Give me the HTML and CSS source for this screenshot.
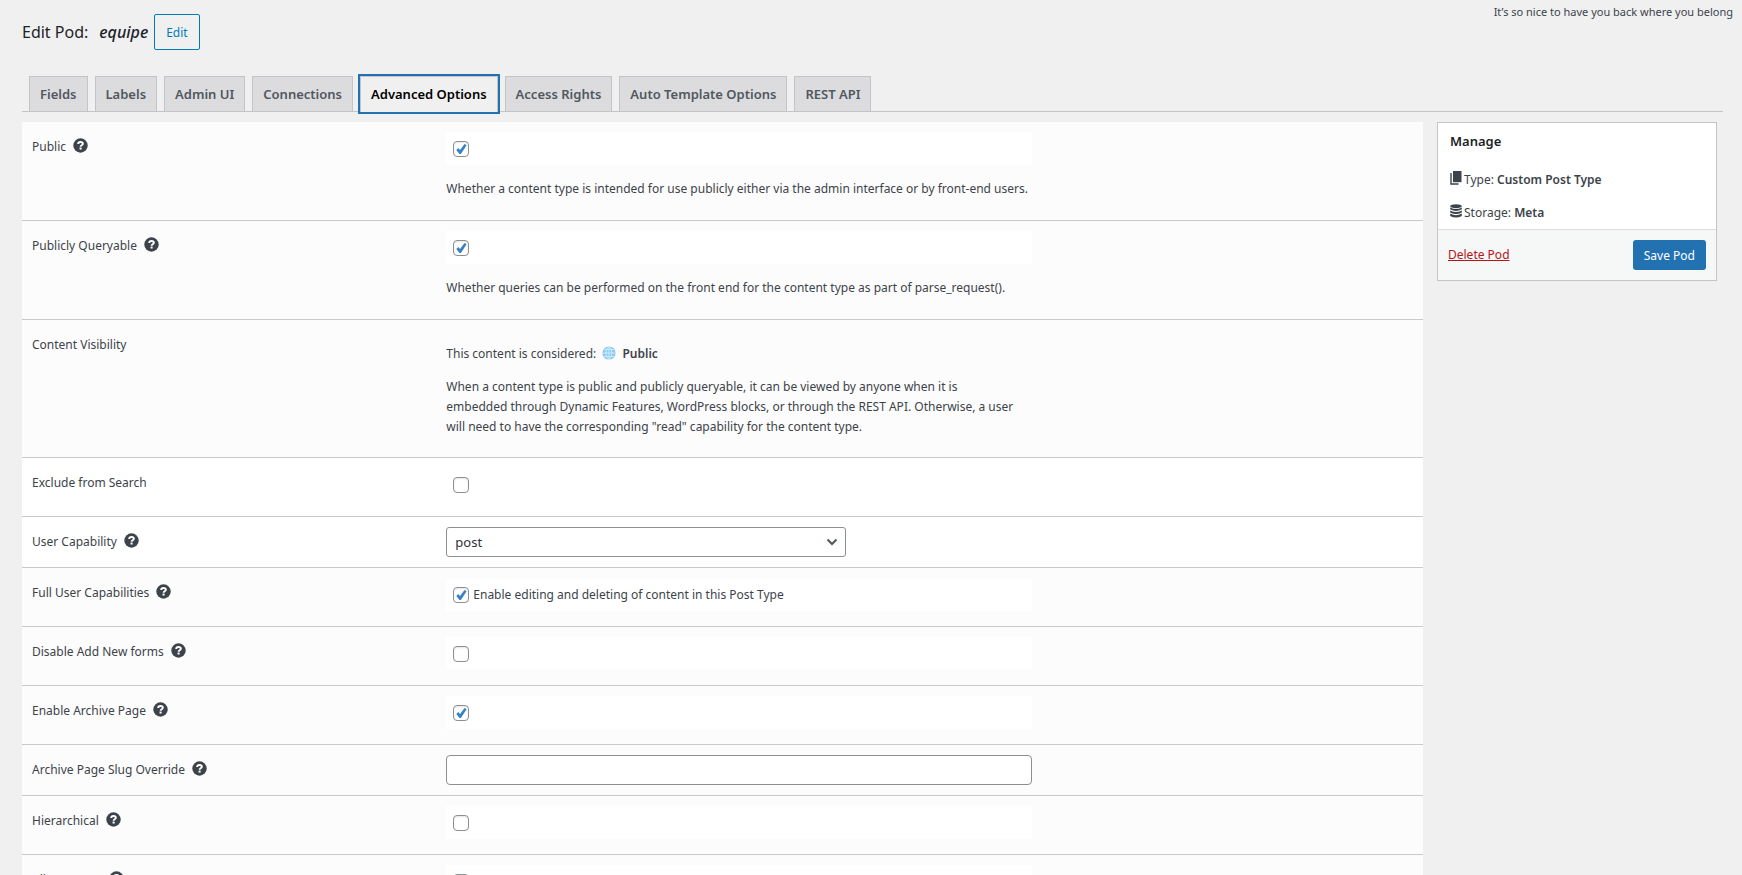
FILE: index.html
```html
<!DOCTYPE html>
<html lang="en">
<head>
    <meta charset="UTF-8">
    <meta name="viewport" content="width=device-width, initial-scale=1.0">
    <title>Edit Pod: equipe</title>
    <link rel="stylesheet" href="styles.css">
</head>
<body>
    <!-- Shared icons -->
    <svg class="sprite" aria-hidden="true">
        <symbol id="icon-help" viewBox="0 0 16 16">
            <circle cx="8" cy="8" r="7.7" fill="#3c434a"/>
            <path d="M5.500 6.400C5.500 4.900 6.500 4.200 8 4.200s2.500.7 2.500 2c0 1.700-2.400 1.500-2.400 3.200" fill="none" stroke="#fff" stroke-width="2"/>
            <rect x="7" y="10.200" width="2.200" height="2.100" fill="#fff"/>
        </symbol>
    </svg>

    <p class="greeting">It’s so nice to have you back where you belong</p>

    <header class="page-header">
        <h1>Edit Pod: <em>equipe</em></h1>
        <button type="button" class="edit-btn">Edit</button>
    </header>

    <nav class="tabs">
        <a href="#fields" class="tab">Fields</a>
        <a href="#labels" class="tab">Labels</a>
        <a href="#admin-ui" class="tab">Admin UI</a>
        <a href="#connections" class="tab">Connections</a>
        <a href="#advanced" class="tab tab-active">Advanced Options</a>
        <a href="#access" class="tab">Access Rights</a>
        <a href="#auto-template" class="tab">Auto Template Options</a>
        <a href="#rest-api" class="tab">REST API</a>
    </nav>

    <div class="layout">
        <main class="options">
            <div class="row">
                <div class="row-label">
                    <label for="public">Public</label>
                    <svg class="help"><use href="#icon-help"/></svg>
                </div>
                <div class="row-field">
                    <div class="check-box"><input type="checkbox" id="public" checked></div>
                    <p class="description">Whether a content type is intended for use publicly either via the admin interface or by front-end users.</p>
                </div>
            </div>

            <div class="row">
                <div class="row-label">
                    <label for="queryable">Publicly Queryable</label>
                    <svg class="help"><use href="#icon-help"/></svg>
                </div>
                <div class="row-field">
                    <div class="check-box"><input type="checkbox" id="queryable" checked></div>
                    <p class="description">Whether queries can be performed on the front end for the content type as part of parse_request().</p>
                </div>
            </div>

            <div class="row">
                <div class="row-label">Content Visibility</div>
                <div class="row-field visibility">
                    <p>This content is considered:
                        <svg class="globe" viewBox="0 0 14 14">
                            <circle cx="7" cy="7" r="6.600" fill="#88c9f9"/>
                            <path d="M7 .5v13M.5 7h13M1.600 3.600h10.800M1.600 10.400h10.800M7 .5C3 3.500 3 10.500 7 13.500M7 .5c4 3 4 10 0 13" fill="none" stroke="#e8f5fe" stroke-width=".7"/>
                        </svg>
                        <strong>Public</strong></p>
                    <p>When a content type is public and publicly queryable, it can be viewed by anyone when it is embedded through Dynamic Features, WordPress blocks, or through the REST API. Otherwise, a user will need to have the corresponding "read" capability for the content type.</p>
                </div>
            </div>

            <div class="row row-plain">
                <div class="row-label"><label for="exclude">Exclude from Search</label></div>
                <div class="row-field">
                    <div class="check-box"><input type="checkbox" id="exclude"></div>
                </div>
            </div>

            <div class="row row-plain">
                <div class="row-label">
                    <label for="capability">User Capability</label>
                    <svg class="help"><use href="#icon-help"/></svg>
                </div>
                <div class="row-field">
                    <div class="select-wrap">
                        <select id="capability">
                            <option>post</option>
                        </select>
                        <svg class="chevron" viewBox="0 0 12 8"><path d="M1.500 1.500 6 6l4.500-4.500" fill="none" stroke="#50575e" stroke-width="2"/></svg>
                    </div>
                </div>
            </div>

            <div class="row">
                <div class="row-label">
                    <span>Full User Capabilities</span>
                    <svg class="help"><use href="#icon-help"/></svg>
                </div>
                <div class="row-field">
                    <div class="check-box">
                        <input type="checkbox" id="full-capabilities" checked>
                        <label for="full-capabilities">Enable editing and deleting of content in this Post Type</label>
                    </div>
                </div>
            </div>

            <div class="row">
                <div class="row-label">
                    <label for="disable-add">Disable Add New forms</label>
                    <svg class="help"><use href="#icon-help"/></svg>
                </div>
                <div class="row-field">
                    <div class="check-box"><input type="checkbox" id="disable-add"></div>
                </div>
            </div>

            <div class="row">
                <div class="row-label">
                    <label for="archive">Enable Archive Page</label>
                    <svg class="help"><use href="#icon-help"/></svg>
                </div>
                <div class="row-field">
                    <div class="check-box"><input type="checkbox" id="archive" checked></div>
                </div>
            </div>

            <div class="row">
                <div class="row-label">
                    <label for="archive-slug">Archive Page Slug Override</label>
                    <svg class="help"><use href="#icon-help"/></svg>
                </div>
                <div class="row-field">
                    <input type="text" id="archive-slug" class="text-input">
                </div>
            </div>

            <div class="row">
                <div class="row-label">
                    <label for="hierarchical">Hierarchical</label>
                    <svg class="help"><use href="#icon-help"/></svg>
                </div>
                <div class="row-field">
                    <div class="check-box"><input type="checkbox" id="hierarchical"></div>
                </div>
            </div>

            <div class="row">
                <div class="row-label">
                    <label for="export">Allow Export</label>
                    <svg class="help"><use href="#icon-help"/></svg>
                </div>
                <div class="row-field">
                    <div class="check-box"><input type="checkbox" id="export"></div>
                </div>
            </div>
        </main>

        <aside class="manage">
            <div class="manage-body">
                <h2>Manage</h2>
                <p>
                    <svg class="manage-icon" viewBox="0 0 12 14"><path d="M3 0h8.500v11.200H3z" fill="#3c434a"/><path d="M1 2v11h7.500" fill="none" stroke="#3c434a" stroke-width="1.400"/></svg>
                    <span>Type: <strong>Custom Post Type</strong></span>
                </p>
                <p>
                    <svg class="manage-icon" viewBox="0 0 12 14"><g fill="#3c434a"><ellipse cx="6" cy="2.200" rx="5.800" ry="2"/><path d="M.2 3.400q5.800 3.200 11.600 0v1.900q-5.800 3.200-11.600 0zM.2 6.500q5.800 3.200 11.600 0v1.900q-5.800 3.200-11.600 0zM.2 9.600q5.800 3.200 11.600 0V12q-5.800 3-11.600 0z"/></g></svg>
                    <span>Storage: <strong>Meta</strong></span>
                </p>
            </div>
            <div class="manage-footer">
                <a href="#delete" class="delete-link">Delete Pod</a>
                <button type="button" class="save-btn">Save Pod</button>
            </div>
        </aside>
    </div>
</body>
</html>
```
FILE: styles.css
```css
:root {
    --page-bg: #f0f0f1;
    --border: #c3c4c7;
    --text: #3c434a;
    --heading: #1d2327;
    --blue: #2271b1;
}

* {
    margin: 0;
    padding: 0;
    box-sizing: border-box;
}

body {
    height: 100vh;
    overflow: hidden;
    background-color: var(--page-bg);
    color: var(--text);
    font-family: "Noto Sans", "Open Sans", sans-serif;
    font-size: 12px;
    line-height: 20px;
}

button,
input,
select {
    font-family: inherit;
}

strong {
    font-weight: 600;
}

.sprite {
    display: none;
}

.greeting {
    height: 14px;
    padding: 2px 9px 0 0;
    font-size: 11px;
    text-align: right;
}

.page-header {
    display: flex;
    align-items: center;
    gap: 6px;
    padding-left: 22px;
}

h1 {
    display: flex;
    gap: 11px;
    color: var(--heading);
    font-size: 16px;
    font-weight: 400;
}

h1 em {
    font-weight: 500;
}

.edit-btn {
    height: 36px;
    padding: 0 11px;
    border: 1px solid #007cba;
    border-radius: 2px;
    background: transparent;
    color: #007cba;
    font-size: 12px;
}

/* Tabs */
.tabs {
    display: flex;
    gap: 7px;
    margin: 26px 19px 10px 22px;
    padding-left: 7px;
    border-bottom: 1px solid var(--border);
}

.tab {
    height: 35px;
    padding: 7px 10px;
    border: 1px solid var(--border);
    border-bottom: none;
    background-color: #dcdcde;
    color: #50575e;
    font-size: 13px;
    font-weight: 600;
    text-decoration: none;
}

.tab-active {
    height: 36px;
    margin-bottom: -1px;
    background-color: var(--page-bg);
    color: #000;
    outline: 2px solid var(--blue);
}

/* Option rows */
.layout {
    display: flex;
    align-items: flex-start;
    gap: 14px;
    padding: 0 25px 0 22px;
}

.options {
    flex: 1;
}

.row {
    display: flex;
    padding: 0 10px;
    border-bottom: 1px solid #c8c9cf;
    background-color: #fcfcfc;
}

.row-plain {
    background-color: #fff;
}

.row-label {
    display: flex;
    align-items: flex-start;
    gap: 7px;
    width: 30%;
    padding-top: 15px;
}

.help {
    width: 15px;
    height: 15px;
    margin-top: 1px;
}

.row-field {
    width: 70%;
    padding: 10px 0;
}

.check-box {
    display: flex;
    align-items: center;
    gap: 4px;
    max-width: 586px;
    height: 33px;
    margin-bottom: 5px;
    padding-left: 7px;
    background-color: #fff;
}

input[type="checkbox"] {
    appearance: none;
    width: 16px;
    height: 16px;
    border: 1px solid #8c8f94;
    border-radius: 4px;
    background-color: #fff;
    box-shadow: inset 0 1px 2px rgba(0, 0, 0, 0.1);
}

input[type="checkbox"]:checked {
    background-image: url("data:image/svg+xml,%3Csvg xmlns='http://www.w3.org/2000/svg' viewBox='0 0 14 14'%3E%3Cpath d='M2.300 7.900 4.300 6 6 8 10.500 2 12.600 3.200 6.900 12H5.500z' fill='%233582c4'/%3E%3C/svg%3E");
}

.description {
    padding: 9px 0 11px;
}

.visibility p {
    max-width: 570px;
    margin: 13px 0;
}

.visibility {
    padding: 11px 0 7px;
}

.globe {
    width: 14px;
    height: 14px;
    margin: 0 3px;
    vertical-align: -2px;
}

.select-wrap {
    position: relative;
    max-width: 400px;
}

select {
    display: block;
    appearance: none;
    width: 100%;
    height: 30px;
    padding: 0 24px 0 8px;
    border: 1px solid #8c8f94;
    border-radius: 3px;
    background-color: #fff;
    color: #2c3338;
    font-size: 13px;
}

.chevron {
    position: absolute;
    top: 11px;
    right: 8px;
    width: 12px;
    height: 8px;
}

.text-input {
    display: block;
    width: 100%;
    max-width: 586px;
    height: 30px;
    padding: 0 8px;
    border: 1px solid #8c8f94;
    border-radius: 4px;
    background-color: #fff;
}

/* Manage box */
.manage {
    width: 280px;
    border: 1px solid var(--border);
    background-color: #fff;
}

.manage-body {
    padding: 8px 12px 6px;
}

.manage h2 {
    margin-bottom: 19px;
    color: var(--heading);
    font-size: 13px;
    font-weight: 600;
}

.manage p {
    display: flex;
    gap: 2px;
}

.manage p + p {
    margin-top: 13px;
}

.manage-icon {
    width: 12px;
    height: 14px;
    margin-top: 1px;
}

.manage-footer {
    display: flex;
    align-items: center;
    justify-content: space-between;
    padding: 10px;
    border-top: 1px solid #dcdcde;
    background-color: #f6f7f7;
}

.delete-link {
    color: #b3151a;
}

.save-btn {
    height: 30px;
    padding: 0 11px;
    border: none;
    border-radius: 3px;
    background-color: var(--blue);
    color: #fff;
    font-size: 12px;
}
```
